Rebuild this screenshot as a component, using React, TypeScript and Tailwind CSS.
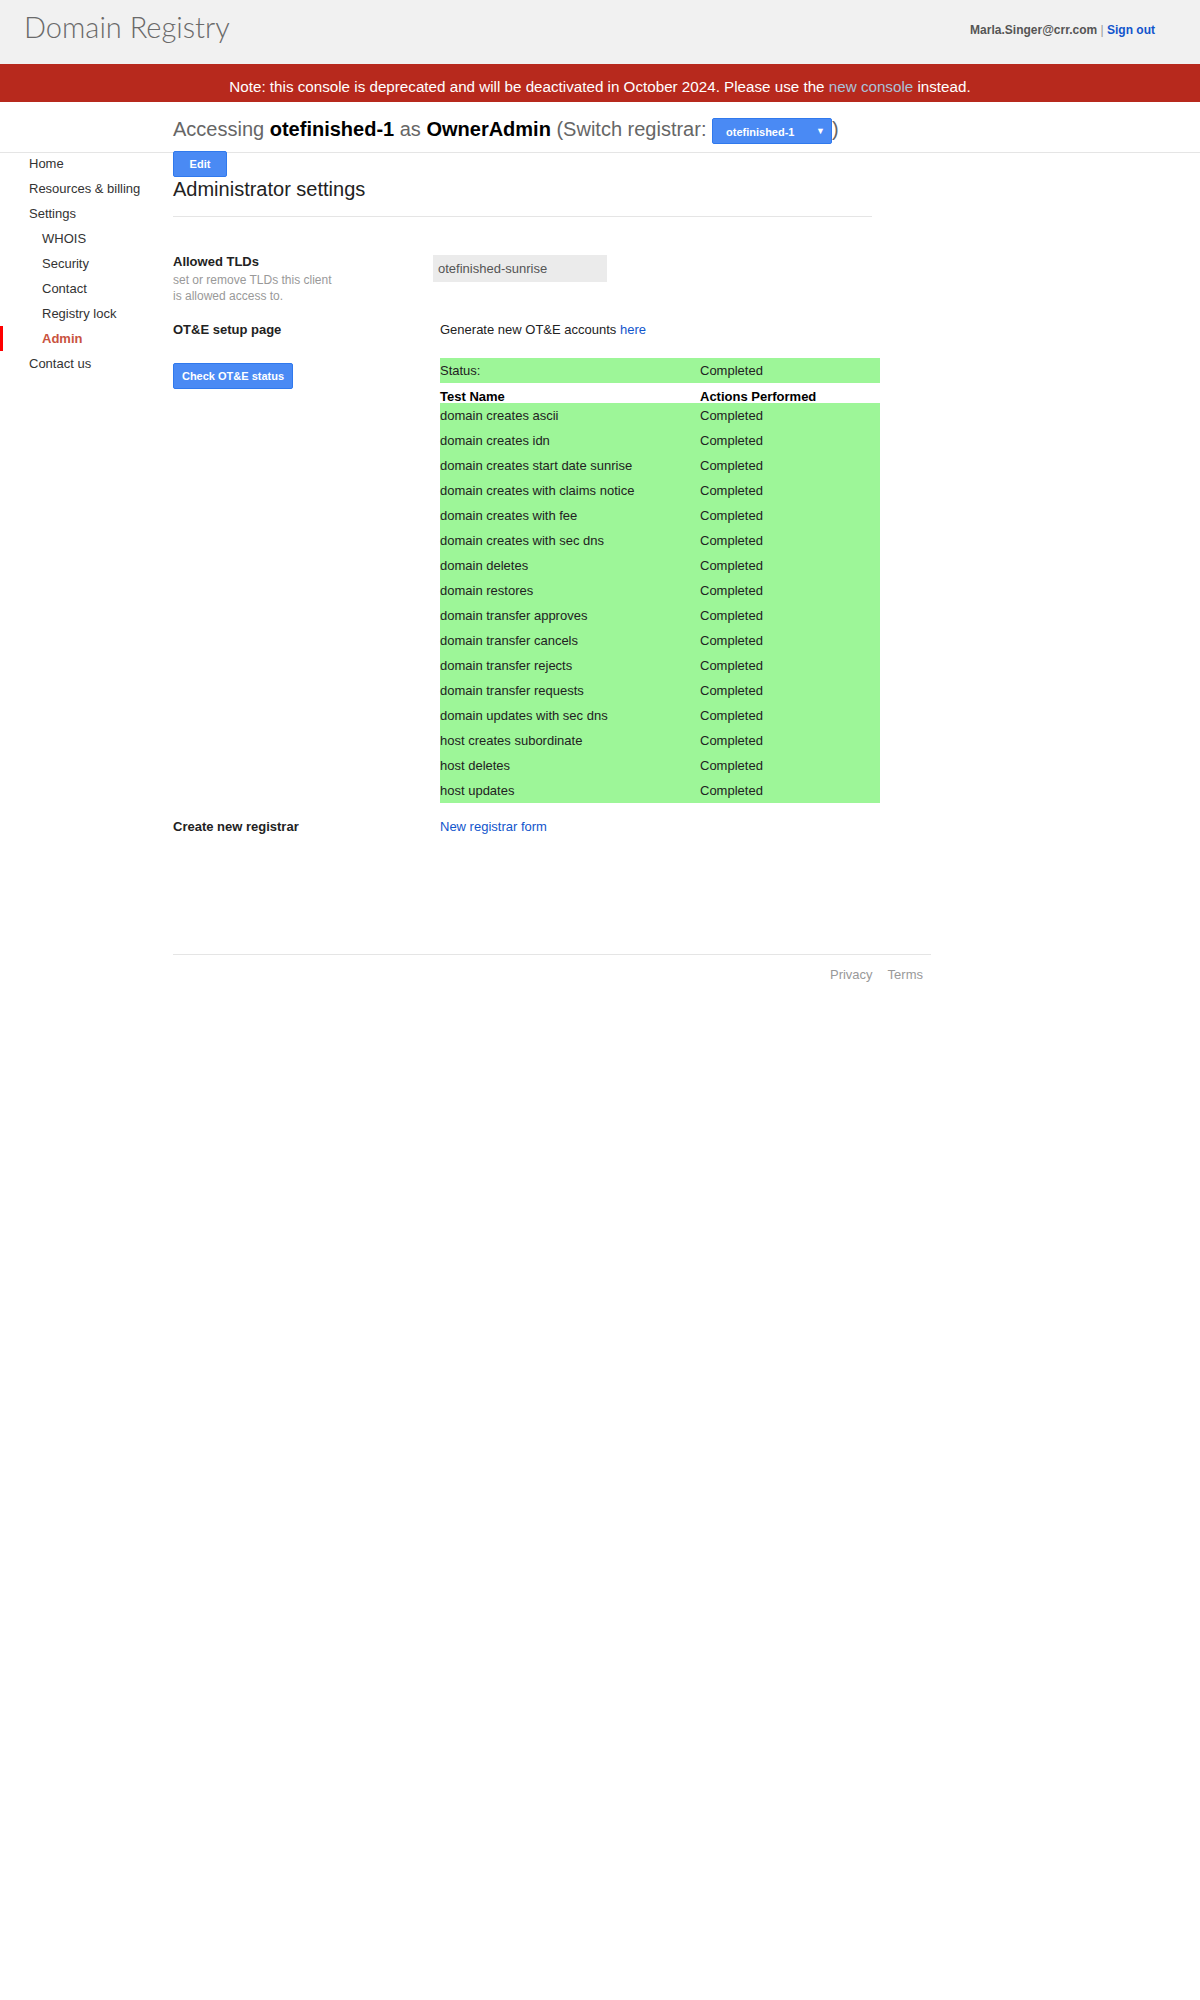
const tests = [
  'domain creates ascii',
  'domain creates idn',
  'domain creates start date sunrise',
  'domain creates with claims notice',
  'domain creates with fee',
  'domain creates with sec dns',
  'domain deletes',
  'domain restores',
  'domain transfer approves',
  'domain transfer cancels',
  'domain transfer rejects',
  'domain transfer requests',
  'domain updates with sec dns',
  'host creates subordinate',
  'host deletes',
  'host updates',
];

type NavItem = { label: string; sub?: boolean; active?: boolean };

const nav: NavItem[] = [
  { label: 'Home' },
  { label: 'Resources & billing' },
  { label: 'Settings' },
  { label: 'WHOIS', sub: true },
  { label: 'Security', sub: true },
  { label: 'Contact', sub: true },
  { label: 'Registry lock', sub: true },
  { label: 'Admin', sub: true, active: true },
  { label: 'Contact us' },
];

function BlueButton({ children, className }: { children: React.ReactNode; className?: string }) {
  return (
    <button
      type="button"
      className={
        'h-[26px] rounded-[2px] border border-[#3079ed] bg-[#4a8af4] text-[11px] font-bold text-white ' +
        (className ?? '')
      }
    >
      {children}
    </button>
  );
}

export default function App() {
  return (
    <div className="min-h-[2000px] bg-white font-['Liberation_Sans',Arial,sans-serif] text-[13px] text-[#222]">
      {/* top bar */}
      <header className="flex h-16 items-start justify-between bg-[#f1f1f1] pl-[24px] pr-[45px]">
        <div className="pt-[9px] font-['Lato',sans-serif] text-[29px] font-light leading-[36px] text-[#6a6a6a]">
          Domain Registry
        </div>
        <div className="pt-[23px] text-[12px] font-bold leading-[15px] text-[#555]">
          Marla.Singer@crr.com <span className="font-normal text-[#999]">|</span>{' '}
          <a className="text-[#15c]">Sign out</a>
        </div>
      </header>

      <div className="h-[38px] bg-[#b7291d] pt-[14px] text-center text-[15.2px] leading-[18px] text-white">
        Note: this console is deprecated and will be deactivated in October 2024. Please use the{' '}
        <a className="text-[#aac2d9]">new console</a> instead.
      </div>

      {/* accessing line */}
      <div className="h-[51px] border-b border-[#e5e5e5] pl-[173px] pt-[15px]">
        <div className="flex items-baseline text-[20px] leading-[24px] text-[#666]">
          <span>
            Accessing <b className="text-black">otefinished-1</b> as{' '}
            <b className="text-black">OwnerAdmin</b> (Switch registrar:&nbsp;
          </span>
          <div className="relative h-[26px] w-[120px] rounded-[2px] border border-[#3079ed] bg-[#4a8af4] pl-[13px] pt-[3px] text-[11px] font-bold leading-[21px] text-white">
            otefinished-1
            <span className="absolute right-[6px] top-[2px] text-[9px]">▼</span>
          </div>
          <span>)</span>
        </div>
      </div>

      <div className="-mt-[2px] flex">
        {/* sidebar */}
        <nav className="w-[173px] shrink-0">
          {nav.map((n) => (
            <div
              key={n.label}
              className={
                'h-[25px] leading-[25px] ' +
                (n.active
                  ? 'border-l-[3px] border-[#ff0000] pl-[39px] font-bold text-[#c9533f]'
                  : n.sub
                    ? 'pl-[42px] text-[#333]'
                    : 'pl-[29px] text-[#333]')
              }
            >
              {n.label}
            </div>
          ))}
        </nav>

        {/* content */}
        <main className="w-[758px]">
          <BlueButton className="w-[54px]">Edit</BlueButton>
          <h1 className="text-[20px] leading-[24px] text-[#222]">Administrator settings</h1>
          <div className="mt-[15px] h-px w-[699px] bg-[#e5e5e5]" />

          <div className="mt-[37px] flex">
            <div className="w-[260px] shrink-0">
              <div className="font-bold leading-[16px] text-[#222]">Allowed TLDs</div>
              <div className="mt-[2px] text-[12px] leading-[16px] text-[#999]">
                set or remove TLDs this client
                <br />
                is allowed access to.
              </div>
            </div>
            <div className="mt-[1px] h-[27px] w-[174px] bg-[#ebebeb] pl-[5px] leading-[27px] text-[#555]">
              otefinished-sunrise
            </div>
          </div>

          <div className="mt-[18px] flex leading-[16px]">
            <div className="w-[260px] shrink-0 font-bold">OT&amp;E setup page</div>
            <div className="pl-[7px]">
              Generate new OT&amp;E accounts <a className="text-[#15c]">here</a>
            </div>
          </div>

          <div className="mt-[20px] flex">
            <div className="w-[267px] shrink-0 pt-[5px]">
              <BlueButton className="w-[120px]">Check OT&amp;E status</BlueButton>
            </div>
            <div className="w-[440px]">
              <div className="flex h-[25px] bg-[#9df698] leading-[25px]">
                <div className="w-[260px]">Status:</div>
                <div>Completed</div>
              </div>
              <div className="flex h-[20px] items-end font-bold leading-[13px] text-black">
                <div className="w-[260px]">Test Name</div>
                <div>Actions Performed</div>
              </div>
              <div className="bg-[#9df698]">
                {tests.map((t) => (
                  <div key={t} className="flex h-[25px] leading-[25px]">
                    <div className="w-[260px]">{t}</div>
                    <div>Completed</div>
                  </div>
                ))}
              </div>
            </div>
          </div>

          <div className="mt-[16px] flex leading-[16px]">
            <div className="w-[267px] shrink-0 font-bold">Create new registrar</div>
            <a className="text-[#15c]">New registrar form</a>
          </div>

          <footer className="mt-[119px] border-t border-[#e5e5e5] pt-[12px]">
            <div className="flex justify-end gap-[15px] pr-[8px] leading-[16px] text-[#999]">
              <a>Privacy</a>
              <a>Terms</a>
            </div>
          </footer>
        </main>
      </div>
    </div>
  );
}
